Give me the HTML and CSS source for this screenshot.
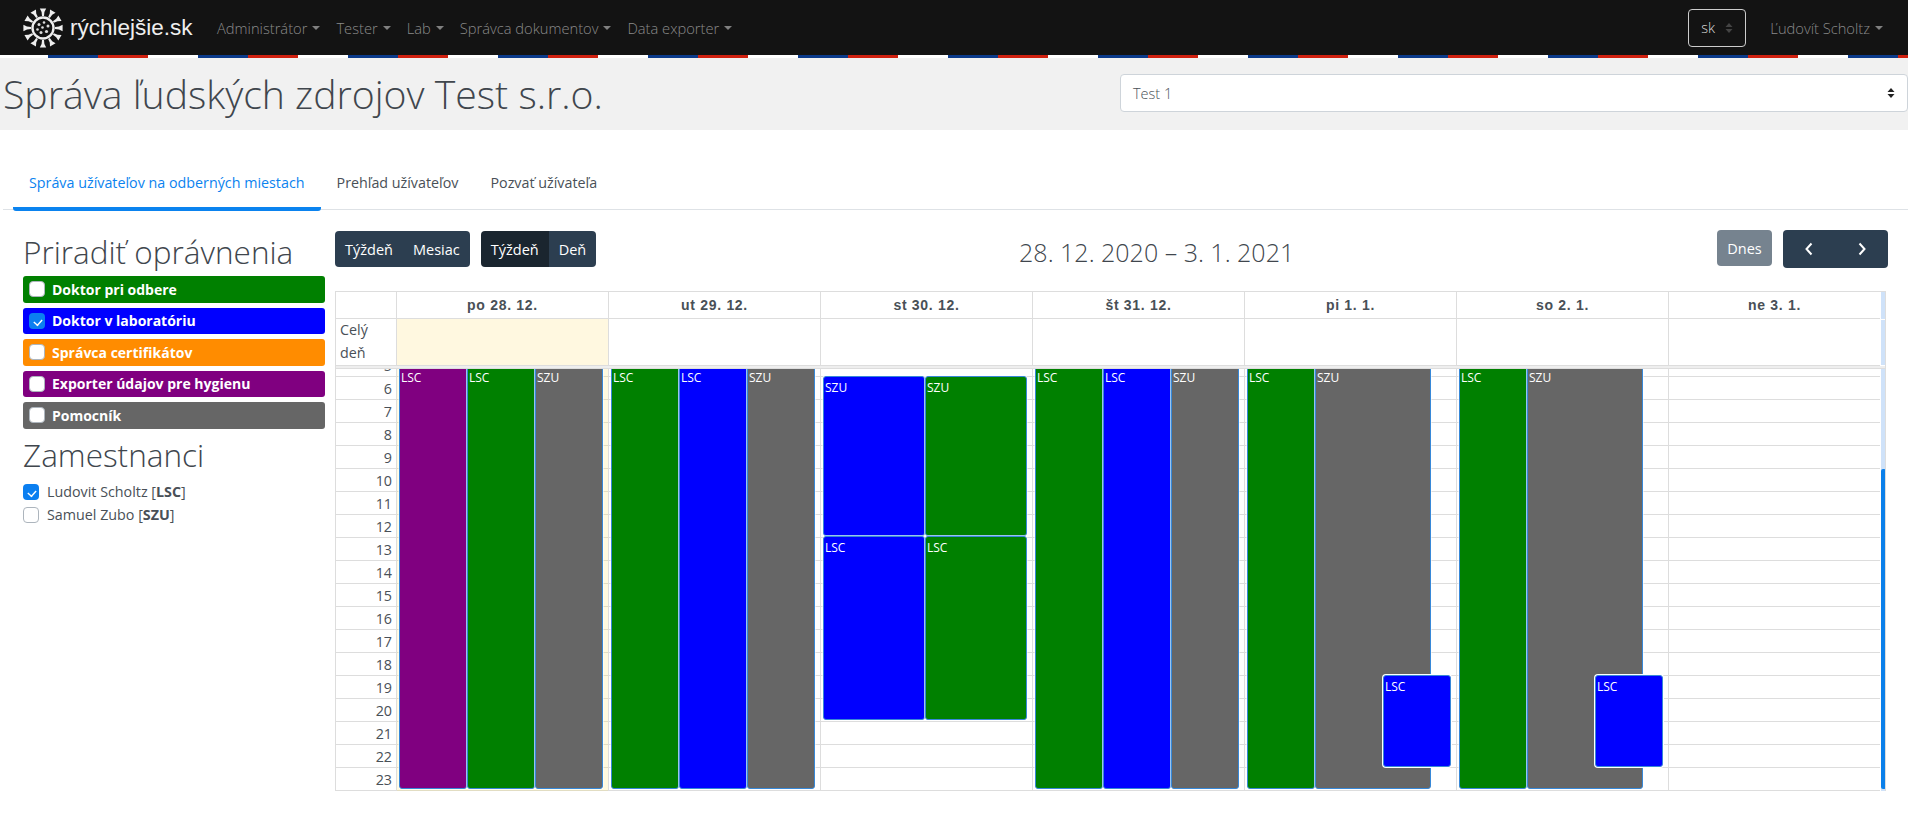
FILE: index.html
```html
<!DOCTYPE html>
<html lang="sk">
<head>
<meta charset="utf-8">
<title>Správa ľudských zdrojov</title>
<link rel="stylesheet" href="styles.css">
</head>
<body>
<header class="navbar">
  <a class="brand">
    <svg class="logo" viewBox="0 0 42 42" aria-hidden="true">
      <defs>
        <path id="spoke" d="M20 9 L19.6 5 L17.8 1.4 L24.2 1.4 L22.4 5 L22 9 Z"/>
      </defs>
      <g fill="#eee">
        <use href="#spoke"/>
        <use href="#spoke" transform="rotate(30 21 21)"/>
        <use href="#spoke" transform="rotate(60 21 21)"/>
        <use href="#spoke" transform="rotate(90 21 21)"/>
        <use href="#spoke" transform="rotate(120 21 21)"/>
        <use href="#spoke" transform="rotate(150 21 21)"/>
        <use href="#spoke" transform="rotate(180 21 21)"/>
        <use href="#spoke" transform="rotate(210 21 21)"/>
        <use href="#spoke" transform="rotate(240 21 21)"/>
        <use href="#spoke" transform="rotate(270 21 21)"/>
        <use href="#spoke" transform="rotate(300 21 21)"/>
        <use href="#spoke" transform="rotate(330 21 21)"/>
      </g>
      <circle cx="21" cy="21" r="10.5" fill="#131313" stroke="#eee" stroke-width="2.4"/>
      <g fill="#ddd">
        <circle cx="17" cy="17.5" r="1.5"/><circle cx="22" cy="15.5" r="1.3"/><circle cx="26" cy="19" r="1.5"/>
        <circle cx="20.5" cy="20.5" r="1.3"/><circle cx="15.5" cy="22.5" r="1.3"/><circle cx="19" cy="25.5" r="1.5"/>
        <circle cx="24.5" cy="24.5" r="1.6"/>
      </g>
    </svg>
    <span class="brand-text">rýchlejšie.sk</span>
  </a>
  <nav class="menu">
    <a class="menu-item">Administrátor</a>
    <a class="menu-item">Tester</a>
    <a class="menu-item">Lab</a>
    <a class="menu-item">Správca dokumentov</a>
    <a class="menu-item">Data exporter</a>
  </nav>
  <div class="nav-right">
    <div class="lang">sk
      <svg class="updown updown-dim" viewBox="0 0 8 12" aria-hidden="true"><path d="M4 1 L7.5 5 L.5 5 Z M4 11 L.5 7 L7.5 7 Z"/></svg>
    </div>
    <a class="menu-item">Ľudovít Scholtz</a>
  </div>
</header>
<div class="stripe"></div>

<section class="jumbo">
  <h1 class="title">Správa ľudských zdrojov Test s.r.o.</h1>
  <div class="place-select">Test 1
    <svg class="updown" viewBox="0 0 8 12" aria-hidden="true"><path d="M4 1 L7.5 5 L.5 5 Z M4 11 L.5 7 L7.5 7 Z"/></svg>
  </div>
</section>

<nav class="tabs">
  <a class="tab tab-active">Správa užívateľov na odberných miestach</a>
  <a class="tab">Prehľad užívateľov</a>
  <a class="tab">Pozvať užívateľa</a>
</nav>

<main class="main">
  <aside class="side">
    <h2 class="side-title">Priradiť oprávnenia</h2>
    <div class="roles">
      <div class="role role-green"><span class="box box-white"></span>Doktor pri odbere</div>
      <div class="role role-blue"><span class="box box-on"></span>Doktor v laboratóriu</div>
      <div class="role role-orange"><span class="box box-white"></span>Správca certifikátov</div>
      <div class="role role-purple"><span class="box box-white"></span>Exporter údajov pre hygienu</div>
      <div class="role role-gray"><span class="box box-white"></span>Pomocník</div>
    </div>
    <h2 class="side-title side-title-2">Zamestnanci</h2>
    <div class="people">
      <div class="person"><span class="box box-on"></span><span>Ludovit Scholtz [<b>LSC</b>]</span></div>
      <div class="person"><span class="box box-off"></span><span>Samuel Zubo [<b>SZU</b>]</span></div>
    </div>
  </aside>

  <section class="calendar">
    <div class="toolbar">
      <div class="tool-left">
        <div class="btn-group"><button class="btn">Týždeň</button><button class="btn">Mesiac</button></div>
        <div class="btn-group"><button class="btn btn-active">Týždeň</button><button class="btn">Deň</button></div>
      </div>
      <h2 class="range">28. 12. 2020 – 3. 1. 2021</h2>
      <div class="tool-right">
        <button class="btn btn-today">Dnes</button>
        <div class="btn-group pager">
          <button class="btn btn-arrow"><svg viewBox="0 0 10 14" class="chev" aria-hidden="true"><path d="M7.5 1.5 L2.5 7 L7.5 12.5"/></svg></button>
          <button class="btn btn-arrow"><svg viewBox="0 0 10 14" class="chev" aria-hidden="true"><path d="M2.5 1.5 L7.5 7 L2.5 12.5"/></svg></button>
        </div>
      </div>
    </div>

    <div class="grid">
      <div class="row row-head">
        <div class="cell-axis"></div>
        <div class="cell-day">po 28. 12.</div>
        <div class="cell-day">ut 29. 12.</div>
        <div class="cell-day">st 30. 12.</div>
        <div class="cell-day">št 31. 12.</div>
        <div class="cell-day">pi 1. 1.</div>
        <div class="cell-day">so 2. 1.</div>
        <div class="cell-day">ne 3. 1.</div>
        <div class="gutter"></div>
      </div>
      <div class="row row-allday">
        <div class="cell-axis axis-allday">Celý deň</div>
        <div class="cell-day cell-today"></div>
        <div class="cell-day"></div>
        <div class="cell-day"></div>
        <div class="cell-day"></div>
        <div class="cell-day"></div>
        <div class="cell-day"></div>
        <div class="cell-day"></div>
        <div class="gutter"></div>
      </div>
      <div class="divider"></div>
      <div class="scroller">
        <div class="hours">
          <div class="hour">5</div><div class="hour">6</div><div class="hour">7</div><div class="hour">8</div>
          <div class="hour">9</div><div class="hour">10</div><div class="hour">11</div><div class="hour">12</div>
          <div class="hour">13</div><div class="hour">14</div><div class="hour">15</div><div class="hour">16</div>
          <div class="hour">17</div><div class="hour">18</div><div class="hour">19</div><div class="hour">20</div>
          <div class="hour">21</div><div class="hour">22</div><div class="hour">23</div>
        </div>
        <div class="columns">
          <div class="col-axis"></div>
          <div class="day day-today">
            <div class="ev ev-purple">LSC</div><div class="ev ev-green">LSC</div><div class="ev ev-gray">SZU</div>
          </div>
          <div class="day">
            <div class="ev ev-green">LSC</div><div class="ev ev-blue">LSC</div><div class="ev ev-gray">SZU</div>
          </div>
          <div class="day day-split">
            <div class="ev ev-blue">SZU</div><div class="ev ev-green">SZU</div>
            <div class="ev ev-blue">LSC</div><div class="ev ev-green">LSC</div>
          </div>
          <div class="day">
            <div class="ev ev-green">LSC</div><div class="ev ev-blue">LSC</div><div class="ev ev-gray">SZU</div>
          </div>
          <div class="day">
            <div class="ev ev-green ev-fixed">LSC</div><div class="ev ev-gray ev-wide">SZU</div>
            <div class="ev ev-blue ev-over">LSC</div>
          </div>
          <div class="day">
            <div class="ev ev-green ev-fixed">LSC</div><div class="ev ev-gray ev-wide">SZU</div>
            <div class="ev ev-blue ev-over">LSC</div>
          </div>
          <div class="day"></div>
          <div class="gutter gutter-scroll"><div class="thumb"></div></div>
        </div>
      </div>
    </div>
  </section>
</main>
</body>
</html>
```
FILE: styles.css
```css
* { box-sizing: border-box; }
html, body { margin: 0; padding: 0; }
body {
  width: 1908px;
  height: 816px;
  overflow: hidden;
  background: #fff;
  color: #495057;
  font-family: "Open Sans", "Liberation Sans", sans-serif;
  font-size: 14.5px;
}

/* navbar */
.navbar {
  height: 55px;
  background: #131313;
  display: flex;
  align-items: center;
  padding: 0 17px 0 22px;
}
.brand { display: flex; align-items: center; }
.logo { width: 42px; height: 42px; display: block; }
.brand-text {
  margin-left: 6px;
  font-family: "Liberation Sans", sans-serif;
  font-size: 22.5px;
  color: #eee;
}
.menu { display: flex; margin-left: 16.5px; }
.menu-item {
  padding: 0 8px;
  color: #8a8a8a;
  font-weight: 300;
  font-size: 14.7px;
  display: flex;
  align-items: center;
  white-space: nowrap;
}
.menu-item::after {
  content: "";
  margin-left: 5px;
  border-top: 4.5px solid #808080;
  border-left: 4.5px solid transparent;
  border-right: 4.5px solid transparent;
}
.nav-right { margin-left: auto; display: flex; align-items: center; }
.lang {
  width: 58px;
  height: 38px;
  margin-right: 16px;
  border: 1px solid #ccc;
  border-radius: 4px;
  color: #ddd;
  font-weight: 300;
  display: flex;
  align-items: center;
  padding-left: 12px;
}
.updown { width: 8px; height: 12px; fill: #222; display: block; margin-left: auto; }
.updown-dim { fill: #444; margin-right: 12px; }

.stripe {
  height: 3px;
  background: linear-gradient(90deg, #0b3a8a 0, #0b3a8a 50px, #d0200f 50px, #d0200f 100px, #fff 100px, #fff 150px) 48px 0 / 150px 100%;
}

/* jumbo */
.jumbo {
  height: 72px;
  background: #f1f1f1;
  display: flex;
  justify-content: space-between;
  align-items: flex-start;
  padding-left: 3px;
}
.title {
  margin: 0;
  font-size: 39.2px;
  font-weight: 300;
  line-height: 50px;
  padding-top: 11px;
  color: #40464d;
}
.place-select {
  width: 788px;
  height: 38px;
  margin-top: 16px;
  background: #fff;
  border: 1px solid #ced4da;
  border-radius: 4px;
  padding: 0 12px;
  display: flex;
  align-items: center;
  font-weight: 300;
}

/* tabs */
.tabs {
  height: 80px;
  margin-left: 3px;
  padding-left: 10px;
  border-bottom: 1px solid #dee2e6;
  display: flex;
  align-items: flex-end;
}
.tab {
  height: 44px;
  margin-bottom: -2px;
  padding: 0 16px;
  line-height: 32px;
  border-bottom: 4px solid transparent;
  border-radius: 0 0 3px 3px;
  font-size: 14.3px;
  font-weight: 400;
}
.tab-active { color: #0b83ef; border-bottom-color: #0b83ef; }

/* layout */
.main { display: flex; padding-left: 23px; }
.side { width: 302px; padding-top: 23px; }
.side-title {
  margin: 0;
  font-size: 31.5px;
  line-height: 38px;
  font-weight: 300;
  color: #40464d;
}
.roles { margin-top: 5px; display: flex; flex-direction: column; gap: 5px; }
.role {
  height: 26.5px;
  border-radius: 3px;
  color: #fff;
  font-weight: 700;
  font-size: 14px;
  display: flex;
  align-items: center;
  padding-left: 6px;
}
.role .box { margin-right: 7px; }
.role-green { background: #008000; }
.role-blue { background: #0000ff; }
.role-orange { background: #ff8c00; }
.role-purple { background: #800080; }
.role-gray { background: #666; }
.box {
  width: 16px;
  height: 16px;
  border-radius: 4px;
  display: block;
  flex: none;
  position: relative;
}
.box-white { background: #fff; border: 1px solid #adb5bd; }
.box-off { background: #fff; border: 1px solid #adb5bd; }
.box-on { background: #0b7ff0; }
.box-on::after {
  content: "";
  position: absolute;
  left: 5px;
  top: 3px;
  width: 6px;
  height: 9px;
  border: solid #fff;
  border-width: 0 2px 2px 0;
  transform: rotate(42deg) scale(.7);
}
.side-title-2 { margin-top: 7.5px; }
.people { margin-top: 6px; }
.person { height: 23px; display: flex; align-items: center; gap: 8px; font-size: 14.3px; font-weight: 400; }
.person b { font-weight: 700; }

/* calendar */
.calendar { margin-left: 10px; width: 1553px; }
.toolbar {
  height: 81px;
  padding-top: 20px;
  display: flex;
  justify-content: space-between;
  align-items: flex-start;
}
.tool-left { display: flex; gap: 11px; margin-top: 1px; }
.tool-right { display: flex; gap: 11px; }
.btn-group { display: flex; }
.btn {
  height: 36px;
  padding: 0 10px;
  border: 0;
  margin: 0;
  background: #2c3e50;
  color: #fff;
  font-family: inherit;
  font-size: 14.5px;
  font-weight: 400;
}
.btn-group .btn:first-child { border-radius: 4px 0 0 4px; }
.btn-group .btn:last-child { border-radius: 0 4px 4px 0; }
.btn-group .btn-active { background: #1a252f; }
.btn-today { background: #76838f; border-radius: 4px; width: 55px; padding: 0; }
.pager .btn-arrow { height: 38px; width: 52.5px; padding: 0; display: flex; align-items: center; justify-content: center; }
.chev { width: 10px; height: 14px; fill: none; stroke: #fff; stroke-width: 2; display: block; }
.range { margin: 0; font-size: 25px; line-height: 44px; font-weight: 300; color: #40464d; }

.grid {
  width: 1551px;
  border: solid #ddd;
  border-width: 1px 1px 0 1px;
}
.row { display: grid; grid-template-columns: 60px repeat(7, 212px) 5px; }
.row-head { height: 27px; }
.row-allday { height: 47px; }
.cell-axis { border-bottom: 1px solid #ddd; }
.cell-day {
  border-left: 1px solid #ddd;
  border-bottom: 1px solid #ddd;
}
.row-head .cell-day {
  font-family: "Liberation Sans", sans-serif;
  font-weight: 700;
  font-size: 14px;
  letter-spacing: .7px;
  text-align: center;
  line-height: 26px;
}
.axis-allday { padding: 0 20px 0 4px; line-height: 22.5px; font-weight: 400; font-size: 14.3px; }
.cell-today { background: #fff8e0; }
.gutter { background: #cfe2f9; margin-left: 1px; }
.row-allday .gutter { margin-top: 1px; margin-bottom: 1px; }
.divider { height: 3px; background: #eee; border-bottom: 1px solid #ddd; }

.scroller { position: relative; height: 422px; overflow: hidden; }
.hours { margin-top: -15px; }
.hour {
  height: 23px;
  border-bottom: 1px solid #ddd;
  width: 1544px;
  padding-right: 1488px;
  text-align: right;
  line-height: 23px;
  font-weight: 400;
  font-size: 14.3px;
}
.columns {
  position: absolute;
  inset: 0;
  display: grid;
  grid-template-columns: 60px repeat(7, 212px) 5px;
}
.day {
  position: relative;
  border-left: 1px solid #ddd;
  display: flex;
  padding: 0 5px 2px 2px;
}
.day-today { background: rgba(255, 220, 40, .15); }
.day-split {
  display: grid;
  grid-template-columns: 1fr 1fr;
  grid-template-rows: 160px 184px;
  padding-top: 7px;
  align-content: start;
}
.ev {
  flex: 1 1 0;
  margin-top: -3px;
  border: 1px solid #3788d8;
  border-radius: 3px;
  box-shadow: 0 0 0 .5px #fff;
  color: #fff;
  font-size: 12px;
  font-weight: 400;
  line-height: 21px;
  padding-left: 1px;
}
.ev-purple { background: #800080; }
.ev-green { background: #008000; }
.ev-blue { background: #0000ff; }
.ev-gray { background: #666; }
.day-split .ev { margin-top: 0; }
.ev-fixed { flex: 0 0 68px; }
.ev-wide { flex: 0 0 116px; }
.ev-over {
  position: absolute;
  right: 5px;
  top: 306px;
  width: 68px;
  height: 92px;
  margin-top: 0;
  box-shadow: 0 0 0 1px #fff;
}
.gutter-scroll { position: relative; }
.thumb {
  position: absolute;
  left: 0;
  right: -1px;
  top: 100px;
  bottom: 2px;
  background: #0b80ea;
  border-radius: 2px;
}
```
